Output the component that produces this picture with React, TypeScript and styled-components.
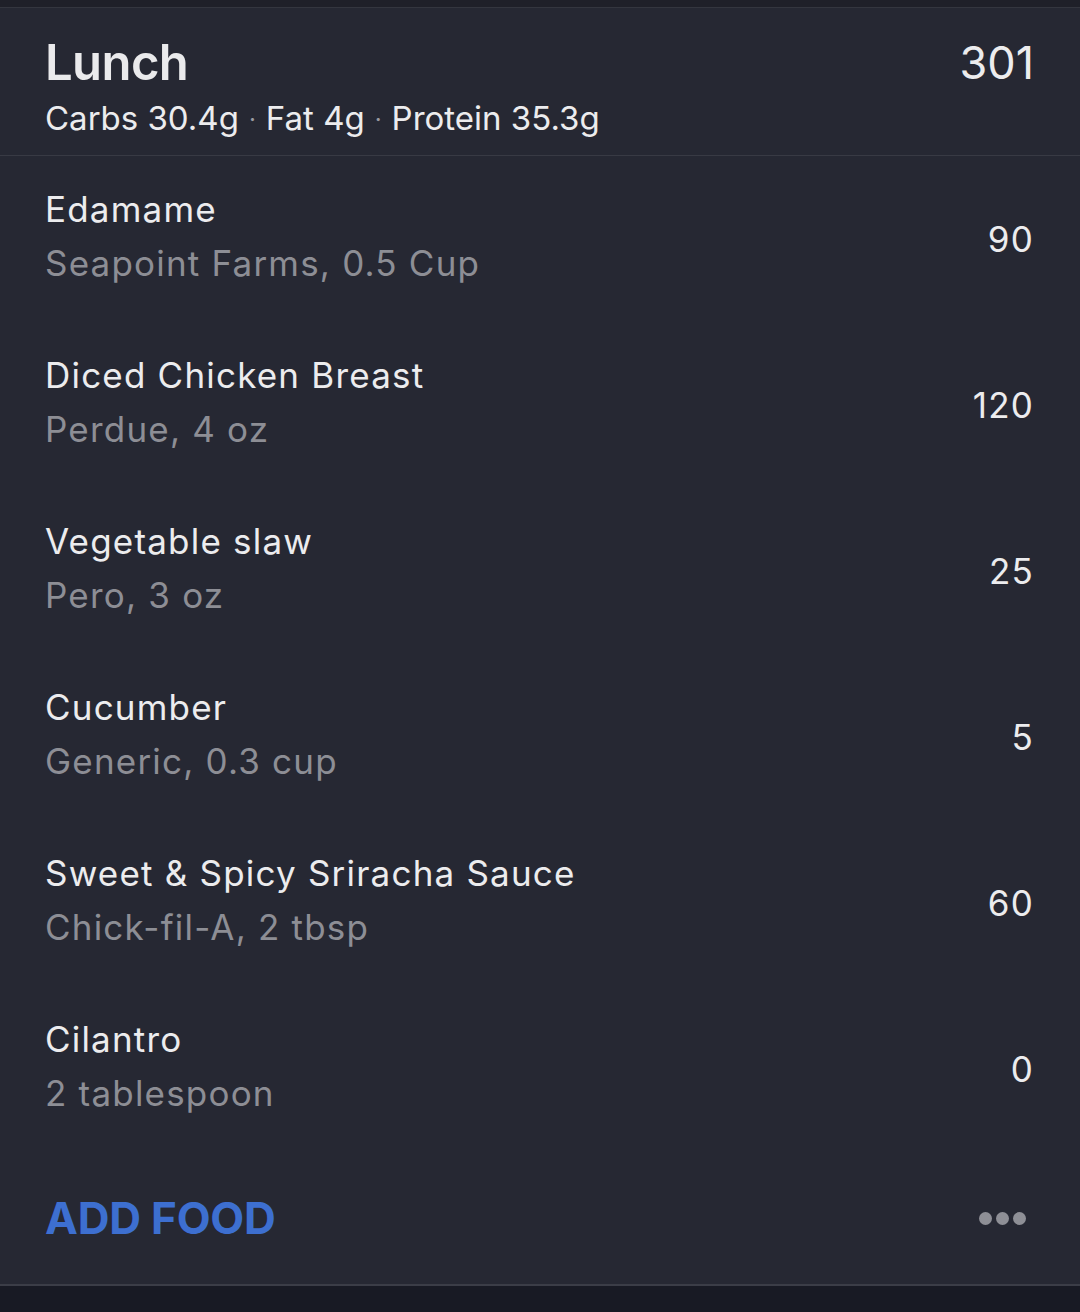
import React from "react";
import styled, { createGlobalStyle } from "styled-components";

const GlobalStyle = createGlobalStyle`
  html, body {
    margin: 0;
    padding: 0;
    background: #181a24;
  }
  body {
    font-family: Inter, "Noto Sans", "DejaVu Sans", sans-serif;
    -webkit-font-smoothing: antialiased;
  }
`;

const Page = styled.div`
  width: 1080px;
  height: 1312px;
  background: #181a24;
  display: flex;
  flex-direction: column;
`;

const TopStrip = styled.div`
  height: 7px;
  background: #1f2029;
  border-bottom: 1px solid #34363f;
`;

const Panel = styled.section`
  background: #262833;
  border-bottom: 2px solid #3b3d47;
`;

const Header = styled.header`
  height: 148px;
  box-sizing: border-box;
  padding: 23px 46px 0 45px;
  display: flex;
  justify-content: space-between;
  align-items: flex-start;
  border-bottom: 1px solid #383a44;
`;

const MealTitle = styled.h2`
  margin: 0;
  font-size: 49px;
  line-height: 64px;
  font-weight: 600;
  color: #eaeaec;
  letter-spacing: -0.6px;
`;

const Macros = styled.div`
  margin-top: 0;
  font-size: 33px;
  line-height: 46px;
  color: #ececee;
`;

const Sep = styled.span`
  color: #9a9aa0;
  font-size: 24px;
  margin: 0 10px;
  vertical-align: 2px;
`;

const TotalCalories = styled.div`
  font-size: 45px;
  line-height: 64px;
  color: #ececee;
`;

const FoodRow = styled.div`
  height: 166px;
  box-sizing: border-box;
  padding: 0 46px 0 45px;
  display: flex;
  justify-content: space-between;
  align-items: center;
`;

const FoodInfo = styled.div`
  display: flex;
  flex-direction: column;
  margin-top: -6px;
`;

const FoodName = styled.div`
  font-size: 35px;
  line-height: 54px;
  letter-spacing: 1.2px;
  color: #ececee;
`;

const FoodDetail = styled.div`
  font-size: 35px;
  line-height: 54px;
  letter-spacing: 1.2px;
  color: #8d8e95;
`;

const FoodCalories = styled.div`
  font-size: 35px;
  line-height: 54px;
  letter-spacing: 1.2px;
  color: #ececee;
`;

const Footer = styled.div`
  height: 132px;
  box-sizing: border-box;
  padding: 0 46px 0 45px;
  display: flex;
  justify-content: space-between;
  align-items: center;
`;

const AddFood = styled.button`
  border: none;
  background: transparent;
  padding: 0;
  margin: 0;
  font-family: Inter, "Noto Sans", sans-serif;
  font-size: 44px;
  font-weight: 700;
  letter-spacing: -0.2px;
  color: #3d6fd0;
  cursor: pointer;
`;

const MoreButton = styled.button`
  border: none;
  background: transparent;
  padding: 0;
  margin-right: 8px;
  display: flex;
  gap: 4px;
  cursor: pointer;
`;

const Dot = styled.span`
  width: 13px;
  height: 13px;
  border-radius: 50%;
  background: #8e8f96;
`;

const Bottom = styled.div`
  flex: 1;
  background: #181a24;
`;

const foods = [
  { name: "Edamame", detail: "Seapoint Farms, 0.5 Cup", kcal: 90 },
  { name: "Diced Chicken Breast", detail: "Perdue, 4 oz", kcal: 120 },
  { name: "Vegetable slaw", detail: "Pero, 3 oz", kcal: 25 },
  { name: "Cucumber", detail: "Generic, 0.3 cup", kcal: 5 },
  { name: "Sweet & Spicy Sriracha Sauce", detail: "Chick-fil-A, 2 tbsp", kcal: 60 },
  { name: "Cilantro", detail: "2 tablespoon", kcal: 0 },
];

export default function App() {
  return (
    <>
      <GlobalStyle />
      <Page>
        <TopStrip />
        <Panel>
          <Header>
            <div>
              <MealTitle>Lunch</MealTitle>
              <Macros>
                Carbs 30.4g<Sep>·</Sep>Fat 4g<Sep>·</Sep>Protein 35.3g
              </Macros>
            </div>
            <TotalCalories>301</TotalCalories>
          </Header>
          {foods.map((f) => (
            <FoodRow key={f.name}>
              <FoodInfo>
                <FoodName>{f.name}</FoodName>
                <FoodDetail>{f.detail}</FoodDetail>
              </FoodInfo>
              <FoodCalories>{f.kcal}</FoodCalories>
            </FoodRow>
          ))}
          <Footer>
            <AddFood>ADD FOOD</AddFood>
            <MoreButton aria-label="More">
              <Dot />
              <Dot />
              <Dot />
            </MoreButton>
          </Footer>
        </Panel>
        <Bottom />
      </Page>
    </>
  );
}
